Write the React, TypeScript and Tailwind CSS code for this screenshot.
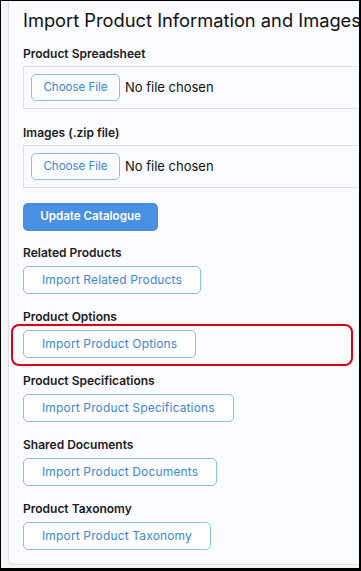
import React from 'react';

const sections = [
  { label: 'Related Products', action: 'Import Related Products' },
  { label: 'Product Options', action: 'Import Product Options', highlight: true },
  { label: 'Product Specifications', action: 'Import Product Specifications' },
  { label: 'Shared Documents', action: 'Import Product Documents' },
  { label: 'Product Taxonomy', action: 'Import Product Taxonomy' },
];

function FileField({ label }: { label: string }) {
  return (
    <div>
      <div className="h-4 text-[12px] leading-4 font-semibold text-[#1b1b1b]">{label}</div>
      <div className="mt-1 flex h-[43px] items-center border border-[#dcdfe4] pl-[7px]">
        <button className="h-[27px] w-[89px] rounded-[5px] border border-[#8cbfe8] bg-[#fbfcff] text-[11.5px] text-[#3c86d3]">
          Choose File
        </button>
        <span className="ml-[5px] text-[13px] text-[#111]">No file chosen</span>
      </div>
    </div>
  );
}

export default function App() {
  return (
    <div
      className="relative h-[571px] w-[361px] overflow-hidden border-t border-l border-r-2 border-b-[3px] border-black bg-[#f4f5f7]"
      style={{ fontFamily: 'Inter, "Noto Sans", sans-serif' }}
    >
      <div className="ml-[7px] h-[564px] w-[420px] rounded-bl-md border-x border-b border-[#dcdfe4] bg-[#fafbfe] pl-[14px] pr-[40px] pt-[7px]">
        <h1 className="h-6 whitespace-nowrap text-[18.3px] leading-6 text-[#111]">
          Import Product Information and Images
        </h1>

        <div className="mt-[14px]">
          <FileField label="Product Spreadsheet" />
        </div>
        <div className="mt-4">
          <FileField label="Images (.zip file)" />
        </div>

        <button className="mt-[15px] h-[28px] w-[135px] rounded-[5px] bg-[#4a90e2] text-[11.6px] font-semibold text-white">
          Update Catalogue
        </button>

        <div className="mt-[14px] flex flex-col gap-[15px]">
          {sections.map((s) => (
            <div key={s.label}>
              <div className="h-4 text-[12px] leading-4 font-semibold text-[#1b1b1b]">{s.label}</div>
              <button className="mt-[5px] h-[28px] rounded-[5px] border border-[#8cbfe8] bg-white px-[18px] text-[12px] tracking-[0.15px] text-[#3c86d3]">
                {s.action}
              </button>
            </div>
          ))}
        </div>
      </div>

      {/* annotation around Product Options */}
      <div className="absolute left-[10px] top-[323px] h-[42px] w-[342px] rounded-[8px] border-2 border-[#dd0010]" />
    </div>
  );
}
